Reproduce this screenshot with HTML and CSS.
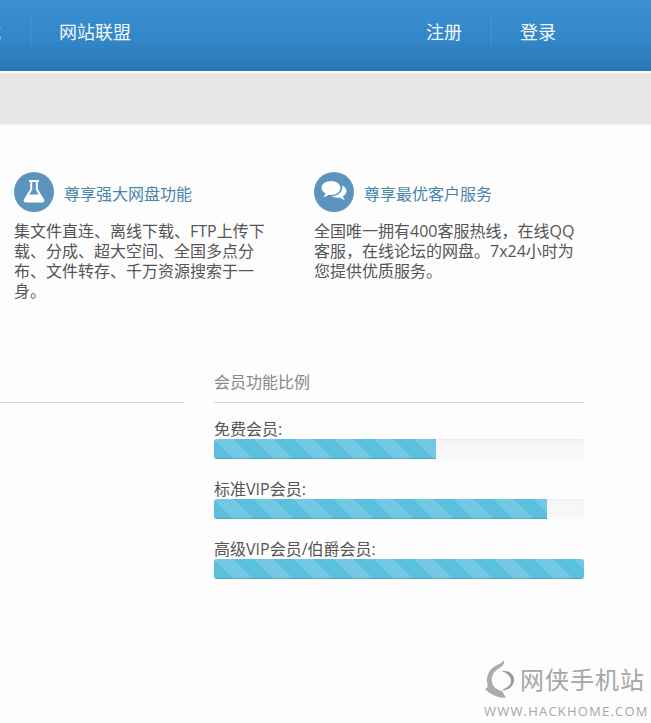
FILE: index.html
```html
<!DOCTYPE html>
<html lang="zh-CN">
<head>
<meta charset="utf-8">
<title>会员功能</title>
<link rel="stylesheet" href="styles.css">
</head>
<body>
<header class="topbar">
  <nav class="nav">
    <a class="nav-item nav-cut">下载</a>
    <a class="nav-item">网站联盟</a>
  </nav>
  <nav class="nav nav-right">
    <a class="nav-item nav-reg">注册</a>
    <a class="nav-item nav-login">登录</a>
  </nav>
</header>
<div class="band"></div>
<main class="content">
  <section class="features">
    <article class="feature">
      <div class="feature-head">
        <svg class="feature-icon" viewBox="0 0 40 40"><circle cx="20" cy="20" r="20" fill="#5b94bd"/><path fill="#fff" d="M15 8h10v2h-1.2v7.2L30 27.2c1 1.7 0 3.3-2 3.3H12c-2 0-3-1.600-2-3.300L16.200 17.200V10H15zM18.200 10v7.800L15.400 22.500h9.200L21.800 17.800V10z"/></svg>
        <h3 class="feature-title">尊享强大网盘功能</h3>
      </div>
      <p class="feature-text">集文件直连、离线下载、FTP上传下载、分成、超大空间、全国多点分布、文件转存、千万资源搜索于一身。</p>
    </article>
    <article class="feature">
      <div class="feature-head">
        <svg class="feature-icon" viewBox="0 0 40 40"><circle cx="20" cy="20" r="20" fill="#5b94bd"/><path fill="#fff" d="M17 9c5.500 0 9.500 3 9.500 7s-4 7-9.500 7c-.8 0-1.500-.1-2.200-.2-1.500 1.300-3.300 2-5.300 2.200 1-1.100 1.700-2.300 2-3.700C9.300 20 7.500 18.200 7.500 16c0-4 4-7 9.500-7z"/><path fill="#fff" d="M28.200 13.500c2.600 1.100 4.300 3.100 4.300 5.500 0 2.100-1.300 3.900-3.600 5.100.3 1.400 1 2.500 2 3.600-2-.2-3.700-.9-5.200-2.200-.7.100-1.400.2-2.200.2-2.400 0-4.500-.7-6-1.700 6.100-.1 10.700-3.600 10.900-8.600 0-.7 0-1.300-.2-1.900z"/></svg>
        <h3 class="feature-title">尊享最优客户服务</h3>
      </div>
      <p class="feature-text">全国唯一拥有400客服热线，在线QQ客服，在线论坛的网盘。7x24小时为您提供优质服务。</p>
    </article>
  </section>
  <section class="lower">
    <div class="lower-left"></div>
    <div class="lower-right">
      <h4 class="panel-title">会员功能比例</h4>
      <div class="meter">
        <div class="meter-label">免费会员:</div>
        <div class="track"><div class="fill" style="width:60%"></div></div>
      </div>
      <div class="meter">
        <div class="meter-label">标准VIP会员:</div>
        <div class="track"><div class="fill" style="width:90%"></div></div>
      </div>
      <div class="meter">
        <div class="meter-label">高级VIP会员/伯爵会员:</div>
        <div class="track"><div class="fill" style="width:100%"></div></div>
      </div>
    </div>
  </section>
</main>
<aside class="watermark">
  <svg class="wm-logo" viewBox="0 0 30 38"><path fill="#ababab" d="M19 0C20 4 17 7 13 9 8 12 6 17 7 22 8 27 12 30 17 31L21 38C12 38 3 33 0 29 3 28 3 26 2 22 1 14 6 8 12 5 15 4 18 2 19 0z"/><path fill="#989898" d="M16 11C24 10 30 15 29 21 28 27 22 31 17 30 22 28 26 25 26 21 26 16 21 12 16 11z"/></svg>
  <div class="wm-name">网侠手机站</div>
  <div class="wm-url">WWW.HACKHOME.COM</div>
</aside>
</body>
</html>
```

FILE: styles.css
```css
* { box-sizing: border-box; }
html, body { margin: 0; padding: 0; }
body {
  position: relative;
  width: 651px;
  height: 723px;
  overflow: hidden;
  background: #fdfdfd;
  color: #555;
  font-family: "Open Sans", "Noto Sans CJK SC", sans-serif;
  font-size: 16px;
}
.topbar {
  display: flex;
  justify-content: space-between;
  height: 71px;
  padding: 15px 66px 0 0;
  background: linear-gradient(to bottom, #3a90d2 0%, #3287c8 55%, #2a78b4 100%);
}
.nav { display: flex; height: 33px; }
.nav-item {
  display: block;
  height: 33px;
  padding: 0 29px 0 28px;
  border-right: 1px solid rgba(255, 255, 255, .1);
  color: #f2f8fc;
  font-size: 18px;
  line-height: 34px;
  white-space: nowrap;
}
.nav-item:last-child { border-right: 0; }
.nav-cut { margin-left: -63px; }
.band {
  height: 52px;
  margin-top: 2px;
  background: #e6e6e6;
  border-top: 1px solid #eee8e3;
  border-bottom: 2px solid #ececec;
}
.features {
  display: flex;
  padding: 47px 0 0 14px;
}
.feature { width: 300px; }
.feature-head {
  display: flex;
  align-items: center;
  gap: 10px;
  height: 40px;
}
.feature-icon { width: 40px; height: 40px; flex: none; }
.feature-title {
  margin: 0;
  padding-top: 4px;
  color: #4a84aa;
  font-size: 16px;
  font-weight: 400;
  line-height: 40px;
}
.feature-text {
  width: 264px;
  margin: 9px 0 0;
  color: #555;
  font-size: 16px;
  line-height: 20px;
}
.lower {
  display: flex;
  gap: 30px;
  margin-top: 61px;
}
.lower-left {
  width: 184px;
  height: 41px;
  border-bottom: 1px solid #c6d9e8;
}
.lower-right { width: 370px; }
.panel-title {
  height: 41px;
  margin: 0 0 16px;
  border-bottom: 1px solid #c6d9e8;
  color: #888;
  font-size: 16px;
  font-weight: 400;
  line-height: 40px;
}
.meter { margin-bottom: 20px; }
.meter-label {
  height: 20px;
  color: #555;
  font-size: 16px;
  line-height: 20px;
}
.track {
  height: 20px;
  overflow: hidden;
  border-radius: 3px;
  background: linear-gradient(to bottom, #f5f5f5, #f9f9f9);
  box-shadow: inset 0 1px 2px rgba(0, 0, 0, .05);
}
.fill {
  height: 100%;
  background-color: #5bc0de;
  background-image: linear-gradient(45deg,
    rgba(255, 255, 255, .15) 25%, transparent 25%,
    transparent 50%, rgba(255, 255, 255, .15) 50%,
    rgba(255, 255, 255, .15) 75%, transparent 75%);
  background-size: 40px 40px;
  box-shadow: inset 0 -1px 0 rgba(0, 0, 0, .15);
}
.watermark {
  position: absolute;
  left: 484px;
  top: 660px;
  width: 165px;
  height: 60px;
}
.wm-logo {
  position: absolute;
  left: 1px;
  top: 0;
  width: 30px;
  height: 38px;
}
.wm-name {
  position: absolute;
  left: 36px;
  top: 4px;
  color: #a6a6a6;
  font-size: 24px;
  line-height: 32px;
  letter-spacing: 1px;
  white-space: nowrap;
}
.wm-url {
  position: absolute;
  left: 0;
  top: 43px;
  color: #a6a6a6;
  font-family: "Open Sans", "Liberation Sans", sans-serif;
  font-size: 13px;
  line-height: 16px;
  letter-spacing: 1.2px;
  white-space: nowrap;
}
```
